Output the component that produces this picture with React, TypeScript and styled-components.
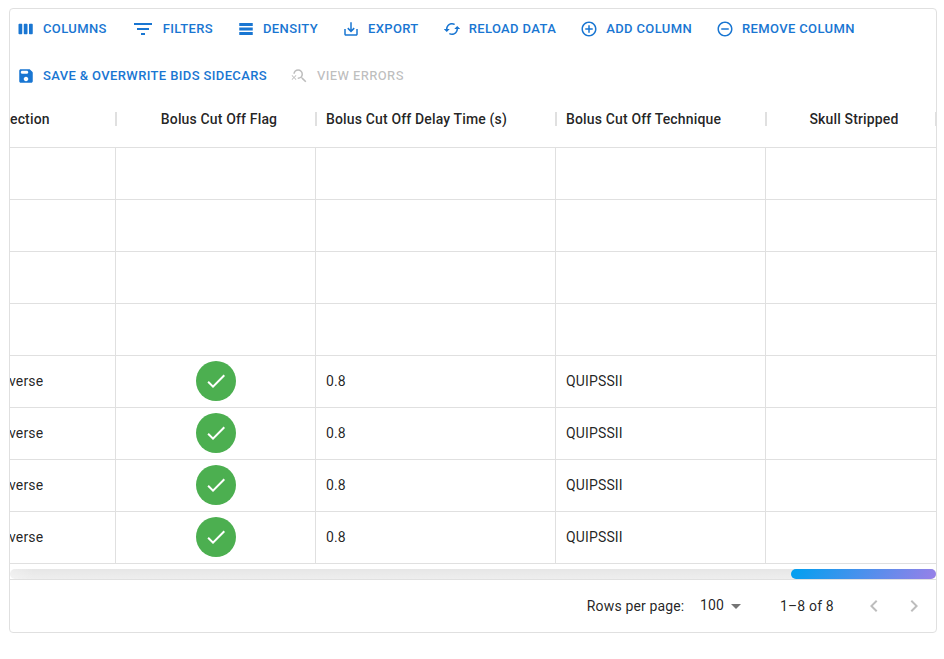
import React from "react";
import styled, { createGlobalStyle, css } from "styled-components";
import {
  MdCached, MdAddCircleOutline, MdRemoveCircleOutline, MdSearchOff, MdCheck,
  MdArrowDropDown, MdKeyboardArrowLeft, MdKeyboardArrowRight, MdSaveAlt, MdFilterList,
} from "react-icons/md";

const LINE = "#e0e0e0";

const GlobalStyle = createGlobalStyle`
  *, *::before, *::after { box-sizing: border-box; }
  body { margin: 0; background: #fff; font-family: Roboto, sans-serif; }
  svg { display: block; flex-shrink: 0; }
`;

const Page = styled.main`
  padding: 8px 7px 0 9px;
`;

const Grid = styled.section`
  width: 928px;
  height: 625px;
  display: flex;
  flex-direction: column;
  border: 1px solid ${LINE};
  border-radius: 4px;
  color: rgba(0, 0, 0, 0.87);
  font-size: 14px;
  line-height: 20px;
  letter-spacing: 0.15px;
  overflow: hidden;
`;

const Toolbar = styled.div`
  height: 82px;
  padding: 4px 4px 0;
  display: flex;
  flex-wrap: wrap;
  align-content: flex-start;
  gap: 16px;
`;

const ToolButton = styled.button<{ $iconSize?: number }>`
  height: 31px;
  padding: 4px 5px;
  display: inline-flex;
  align-items: center;
  gap: 8px;
  border: 0;
  background: transparent;
  color: #1976d2;
  font: 500 13px/22.75px Roboto, sans-serif;
  letter-spacing: 0.371px;
  text-transform: uppercase;
  white-space: nowrap;

  svg {
    width: ${(p) => p.$iconSize ?? 18}px;
    height: ${(p) => p.$iconSize ?? 18}px;
    margin-left: -2px;
  }
  &:disabled { color: rgba(0, 0, 0, 0.26); }
`;

const ToolLabel = styled.span`
  padding-top: 1px;
`;

const Row = styled.div`
  display: grid;
  grid-template-columns: 106px 200px 240px 210px 170px;
  height: 52px;
`;

const HeaderRow = styled(Row)`
  height: 57px;
  border-bottom: 1px solid ${LINE};
`;

const clipped = css`
  justify-content: flex-start;
  padding-left: 0;
`;

const HeaderCell = styled.div<{ $center?: boolean; $clipped?: boolean }>`
  position: relative;
  display: flex;
  align-items: center;
  justify-content: ${(p) => (p.$center ? "center" : "flex-start")};
  padding: 0 ${(p) => (p.$center ? "4px" : "10px")} 0 10px;
  font-weight: 500;
  white-space: nowrap;
  overflow: hidden;
  ${(p) => p.$clipped && clipped}
`;

const HeaderRule = styled.i<{ $side: "left" | "right" }>`
  position: absolute;
  ${(p) => p.$side}: 0;
  top: 21px;
  width: 1px;
  height: 14px;
  background: ${LINE};
`;

const Cell = styled.div<{ $center?: boolean; $clipped?: boolean }>`
  display: flex;
  align-items: center;
  justify-content: ${(p) => (p.$center ? "center" : "flex-start")};
  padding: 0 10px 1px;
  border-right: 1px solid ${LINE};
  border-bottom: 1px solid ${LINE};
  white-space: nowrap;
  overflow: hidden;
  ${(p) => p.$clipped && clipped}
  &:last-child { border-right: 0; }
`;

const ClippedText = styled.span<{ $shift: number }>`
  margin-left: ${(p) => -p.$shift}px;
`;

const Avatar = styled.span`
  width: 40px;
  height: 40px;
  display: grid;
  place-items: center;
  border-radius: 50%;
  background: #4caf50;
  color: #fff;
`;

const Scrollbar = styled.div`
  height: 10px;
  margin-top: 5px;
  display: flex;
  justify-content: flex-end;
  border-radius: 5px;
  background:
    linear-gradient(90deg, rgba(255, 255, 255, 0.3), transparent 24px),
    linear-gradient(#e6e6e6, #eee);
`;

const Thumb = styled.div`
  width: 145px;
  border-radius: 5px;
  background: linear-gradient(120deg, #00a0f0, #9980e8);
`;

const Footer = styled.footer`
  height: 53px;
  display: flex;
  align-items: center;
  justify-content: flex-end;
  padding-right: 2px;
  border-top: 1px solid ${LINE};
`;

const PageSize = styled.div`
  display: flex;
  align-items: center;
  width: 64px;
  margin: 0 0 2px 15.6px;
  svg { margin-top: 2px; color: rgba(0, 0, 0, 0.54); }
`;

const Range = styled.span`
  width: 54px;
  margin-left: 16px;
  white-space: nowrap;
`;

const Pager = styled.div`
  display: flex;
  margin-left: 20px;
`;

const PageButton = styled.button`
  width: 40px;
  height: 40px;
  padding: 8px;
  border: 0;
  background: transparent;
  color: rgba(0, 0, 0, 0.26);
`;

const ColumnsIcon = () => (
  <svg viewBox="0 0 24 24" fill="currentColor">
    <path d="M6 5H3c-.55 0-1 .45-1 1v12c0 .55.45 1 1 1h3c.55 0 1-.45 1-1V6c0-.55-.45-1-1-1zm14 0h-3c-.55 0-1 .45-1 1v12c0 .55.45 1 1 1h3c.55 0 1-.45 1-1V6c0-.55-.45-1-1-1zm-7 0h-3c-.55 0-1 .45-1 1v12c0 .55.45 1 1 1h3c.55 0 1-.45 1-1V6c0-.55-.45-1-1-1z" />
  </svg>
);

const DensityIcon = () => (
  <svg viewBox="0 0 24 24" fill="currentColor">
    <path d="M21,8H3V4h18V8z M21,10H3v4h18V10z M21,16H3v4h18V16z" />
  </svg>
);

const SaveIcon = () => (
  <svg viewBox="0 0 24 24" fill="currentColor">
    <path d="M17.59 3.59c-.38-.38-.89-.59-1.42-.59H5c-1.11 0-2 .9-2 2v14c0 1.1.9 2 2 2h14c1.1 0 2-.9 2-2V7.83c0-.53-.21-1.04-.59-1.41l-2.82-2.83zM12 19c-1.66 0-3-1.34-3-3s1.34-3 3-3 3 1.34 3 3-1.34 3-3 3zm1-10H7c-1.1 0-2-.9-2-2s.9-2 2-2h6c1.1 0 2 .9 2 2s-.9 2-2 2z" />
  </svg>
);

const tools = [
  { label: "Columns", icon: <ColumnsIcon /> },
  { label: "Filters", icon: <MdFilterList />, size: 24 },
  { label: "Density", icon: <DensityIcon /> },
  { label: "Export", icon: <MdSaveAlt /> },
  { label: "Reload data", icon: <MdCached /> },
  { label: "Add column", icon: <MdAddCircleOutline /> },
  { label: "Remove column", icon: <MdRemoveCircleOutline /> },
  { label: "Save & overwrite BIDS sidecars", icon: <SaveIcon /> },
  { label: "View errors", icon: <MdSearchOff />, disabled: true },
];

const headers = [
  { label: "ection", clipped: true },
  { label: "Bolus Cut Off Flag", center: true },
  { label: "Bolus Cut Off Delay Time (s)" },
  { label: "Bolus Cut Off Technique" },
  { label: "Skull Stripped", center: true },
];

const rows = Array.from({ length: 8 }, (_, i) =>
  i < 4 ? null : { direction: "verse", delay: "0.8", technique: "QUIPSSII" }
);

export default function App() {
  return (
    <Page>
      <GlobalStyle />
      <Grid>
        <Toolbar>
          {tools.map((t) => (
            <ToolButton key={t.label} $iconSize={t.size} disabled={t.disabled}>
              {t.icon}
              <ToolLabel>{t.label}</ToolLabel>
            </ToolButton>
          ))}
        </Toolbar>
        <HeaderRow>
          {headers.map((h, i) => (
            <HeaderCell key={h.label} $center={h.center} $clipped={h.clipped}>
              {i > 0 && <HeaderRule $side="left" />}
              {h.label}
              <HeaderRule $side="right" />
            </HeaderCell>
          ))}
        </HeaderRow>
        {rows.map((r, i) => (
          <Row key={i}>
            <Cell $clipped>{r && <ClippedText $shift={1}>{r.direction}</ClippedText>}</Cell>
            <Cell $center>{r && <Avatar><MdCheck size={24} /></Avatar>}</Cell>
            <Cell>{r?.delay}</Cell>
            <Cell>{r?.technique}</Cell>
            <Cell />
          </Row>
        ))}
        <Scrollbar><Thumb /></Scrollbar>
        <Footer>
          <span>Rows per page:</span>
          <PageSize>100<MdArrowDropDown size={24} /></PageSize>
          <Range>1–8 of 8</Range>
          <Pager>
            <PageButton disabled aria-label="Previous page"><MdKeyboardArrowLeft size={24} /></PageButton>
            <PageButton disabled aria-label="Next page"><MdKeyboardArrowRight size={24} /></PageButton>
          </Pager>
        </Footer>
      </Grid>
    </Page>
  );
}
